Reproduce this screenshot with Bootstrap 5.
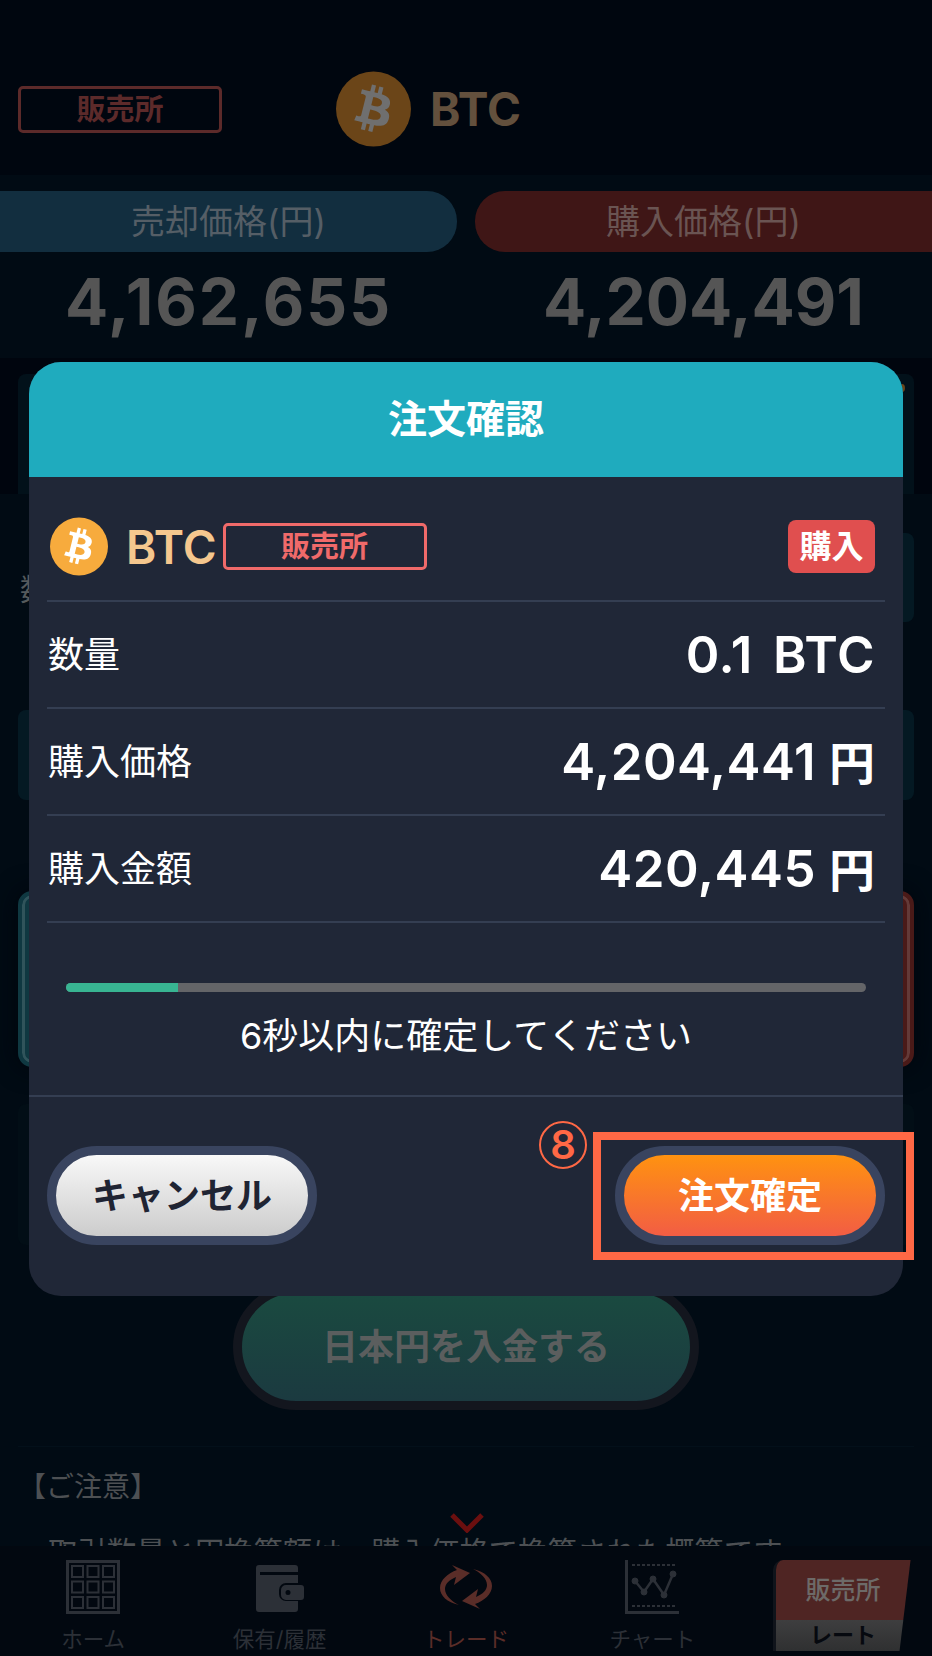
<!DOCTYPE html>
<html lang="ja">
<head>
  <meta charset="UTF-8" />
  <meta name="viewport" content="width=device-width, initial-scale=1.0"/>
  <title>注文確認</title>
  <link href="https://cdn.jsdelivr.net/npm/bootstrap@5.3.0/dist/css/bootstrap.min.css" rel="stylesheet"/>
  <style>
    body { background: #010b14; font-family: Inter, "Noto Sans CJK JP", sans-serif; width: 932px; height: 1656px; overflow: hidden; }
    .app-page { position: relative; height: 1656px; overflow: hidden; }
    .btc-disc { fill: var(--disc); }
    .btc-glyph { fill: var(--glyph); }

    /* dimmed page behind the dialog */
    .top-head { height: 175px; background: #00060f; padding: 71px 0 28px 18px; }
    .market-tag { border: 3px solid; border-radius: 5px; width: 204px; height: 47px; font-size: 29px; font-weight: 700; line-height: 1; }
    .top-head .market-tag { border-color: #5c2a2a; color: #5c2a2a; margin-right: 114px; }
    .top-coin { width: 75px; height: 76px; --disc: #6b4518; --glyph: #6f6f6f; }
    .top-sym { font-size: 46px; font-weight: 700; color: #63503d; margin-left: 19px; line-height: 1; }
    .price-wrap { height: 183px; padding-top: 16px; }
    .price-col { width: 457px; }
    .price-bar { height: 61px; font-size: 34px; line-height: 61px; text-align: center; }
    .price-bar.sell { background: #122e3f; color: #555e66; border-radius: 0 30px 30px 0; }
    .price-bar.buy { background: #3f1616; color: #6a5452; border-radius: 30px 0 0 30px; }
    .price-num { font-size: 64px; font-weight: 700; color: #555555; text-align: center; line-height: 1; margin-top: 18px; letter-spacing: 2px; }
    .price-num.tight { letter-spacing: 0; }
    .coin-band { height: 136px; background: #00050e; padding-top: 16px; }
    .ghost-panel { background: #02111a; border-radius: 8px; margin: 0 18px; }
    .coin-band .ghost-panel { height: 120px; border-radius: 8px 8px 0 0; position: relative; }
    .ghost-speck { position: absolute; right: 9px; top: 10px; width: 6px; height: 8px; background: #6b4518; border-radius: 50%; }
    .qty-line { height: 89px; margin: 39px 18px 0 20px; font-size: 30px; color: #555a5c; }
    .qty-box { flex: 1; height: 89px; background: #041923; border-radius: 8px; margin-left: 120px; }
    .rate-panel { height: 90px; background: #041923; margin-top: 88px; }
    .side-row { margin: 91px 18px 0; height: 176px; gap: 20px; }
    .side-btn { flex: 1; border-radius: 14px; border: 4px solid; box-shadow: inset 0 0 0 3px rgba(255,255,255,.14), 0 0 24px #00050c; }
    .side-btn.sell { background: #0f3841; border-color: #0f3841; }
    .side-btn.buy { background: #4a1a18; border-color: #4a1a18; }
    .info-panel { height: 141px; background: #020e16; margin-top: 37px; }
    .deposit-btn { width: 466px; height: 126px; margin: 39px auto 0; border-radius: 63px; border: 9px solid #13161e; background: linear-gradient(#1a4a40, #1b3a40); color: #5b5e5e; font-size: 36px; font-weight: 700; }
    .notes { flex: 1; min-height: 0; overflow: hidden; margin: 36px 18px 0; border-top: 1px solid #03101a; color: #4d5053; }
    .notes-head { font-size: 28px; line-height: 40px; margin-top: 20px; }
    .notes-line { font-size: 29.4px; line-height: 40px; margin: 26px 0 0 30px; white-space: nowrap; }
    .page-col { height: 1656px; }
    .down-mark { position: absolute; left: 450px; top: 1513px; }

    /* tab bar */
    .tab-row { height: 110px; background: #020810; }
    .tab-cell { width: 20%; padding-top: 14px; text-align: center; color: #2c3037; font-size: 21.5px; line-height: 1; }
    .tab-cell svg { display: block; margin: 0 auto 15px; height: 54px; }
    .tab-cell.now { color: #5a2d28; }
    .rate-tab { width: 138px; height: 91px; margin-left: 27px; border-left: 3px solid #10141b; clip-path: polygon(0 0, 100% 0, 92% 100%, 0 100%); border-radius: 10px 0 0 0; overflow: hidden; }
    .rate-top { height: 60px; background: #4f2523; color: #6d6a68; font-size: 25px; font-weight: 500; line-height: 60px; text-align: center; }
    .rate-low { height: 31px; background: linear-gradient(#3e3e3f, #2f3031); color: #06090f; font-size: 22px; font-weight: 700; line-height: 31px; text-align: center; }

    /* dialog */
    .confirm-box { position: absolute; left: 29px; top: 362px; width: 874px; height: 934px; background: #202737; border-radius: 32px; border: 0; color: #fff; overflow: hidden; }
    .confirm-head { height: 115px; background: #1fabbe; font-size: 39px; font-weight: 700; }
    .confirm-body { padding: 0 18px; }
    .sum-row { border-bottom: 2px solid #343e52; height: 107px; padding: 0 10px 0 1px; }
    .sum-row.first { height: 125px; padding: 16px 10px 0 3px; }
    .sum-coin { width: 58px; height: 59px; --disc: #f7ab3d; --glyph: #fff; }
    .sum-sym { font-size: 46px; font-weight: 600; color: #f5c78e; margin-left: 18px; line-height: 1; }
    .sum-row .market-tag { border-color: #f06a6a; color: #f06a6a; margin-left: 6px; }
    .side-flag { width: 87px; height: 53px; background: #e04f4f; border-radius: 8px; font-size: 32px; font-weight: 700; }
    .sum-label { font-size: 36px; }
    .sum-val { font-size: 51px; font-weight: 600; line-height: 1; letter-spacing: .5px; word-spacing: 7px; }
    .sum-val i { font-style: normal; font-size: 46px; margin-left: 13px; letter-spacing: 0; }
    .time-bar { height: 9px; background: #646568; border-radius: 5px; margin: 60px 19px 0; }
    .time-bar .progress-bar { background: #38b592; width: 14%; }
    .time-note { font-size: 36px; text-align: center; margin-top: 19px; line-height: 50px; }
    .confirm-foot { position: absolute; left: 0; right: 0; top: 733px; border-top: 2px solid #343e52; padding: 49px 18px 0; }
    .pill-btn { width: 270px; height: 99px; border-radius: 50px; border: 9px solid #39445f; font-size: 36px; font-weight: 700; padding: 0; }
    .pill-btn.off { background: linear-gradient(#f8f8f8, #cccccc); color: #1f2433; }
    .pill-btn.go { background: linear-gradient(#ff9210, #f25d44); color: #fff; }

    /* guide marks on the picture */
    .guide-box { position: absolute; left: 593px; top: 1132px; width: 321px; height: 128px; border: 8px solid #ff6845; }
    .guide-num { position: absolute; left: 539px; top: 1121px; width: 48px; height: 48px; border: 2px solid #ff6845; border-radius: 50%; color: #ff6845; font-size: 40px; font-weight: 600; line-height: 1; }
  </style>
</head>
<body>
  <svg width="0" height="0" class="position-absolute">
    <symbol id="btc-mark" viewBox="0 0 64 64">
      <circle cx="32" cy="32" r="32" class="btc-disc"/>
      <path class="btc-glyph" d="M46.103 27.444c.637-4.258-2.605-6.547-7.038-8.074l1.438-5.768-3.511-.875-1.4 5.616c-.923-.23-1.871-.447-2.813-.662l1.41-5.653-3.509-.875-1.439 5.766c-.764-.174-1.514-.346-2.242-.527l.004-.018-4.842-1.209-.934 3.75s2.605.597 2.55.634c1.422.355 1.679 1.296 1.636 2.042l-1.638 6.571c.098.025.225.061.365.117l-.371-.092-2.296 9.205c-.174.432-.615 1.08-1.609.834.035.051-2.552-.637-2.552-.637l-1.743 4.019 4.569 1.139c.85.213 1.683.436 2.503.646l-1.453 5.834 3.507.875 1.439-5.772c.958.26 1.888.5 2.798.726l-1.434 5.745 3.511.875 1.453-5.823c5.987 1.133 10.489.676 12.384-4.739 1.527-4.36-.076-6.875-3.226-8.515 2.294-.529 4.022-2.038 4.483-5.155zM38.08 38.696c-1.085 4.36-8.426 2.003-10.806 1.412l1.928-7.729c2.38.594 10.012 1.77 8.878 6.317zm1.086-11.315c-.99 3.966-7.1 1.951-9.082 1.457l1.748-7.01c1.982.494 8.365 1.416 7.334 5.553z"/>
    </symbol>
  </svg>

  <div class="app-page">
    <div class="page-col d-flex flex-column">
      <div class="top-head d-flex align-items-center">
        <div class="market-tag d-flex align-items-center justify-content-center">販売所</div>
        <svg class="top-coin"><use href="#btc-mark"/></svg>
        <div class="top-sym">BTC</div>
      </div>

      <div class="price-wrap d-flex justify-content-between">
        <div class="price-col">
          <div class="price-bar sell">売却価格(円)</div>
          <div class="price-num">4,162,655</div>
        </div>
        <div class="price-col">
          <div class="price-bar buy">購入価格(円)</div>
          <div class="price-num tight">4,204,491</div>
        </div>
      </div>

      <div class="coin-band"><div class="ghost-panel"><span class="ghost-speck"></span></div></div>

      <div class="qty-line d-flex align-items-center"><span class="pt-4">数量</span><div class="qty-box"></div></div>
      <div class="ghost-panel rate-panel"></div>
      <div class="side-row d-flex">
        <div class="side-btn sell"></div>
        <div class="side-btn buy"></div>
      </div>
      <div class="ghost-panel info-panel"></div>
      <div class="deposit-btn d-flex align-items-center justify-content-center">日本円を入金する</div>
      <div class="notes">
        <div class="notes-head">【ご注意】</div>
        <div class="notes-line">取引数量と円換算額は、購入価格で換算された概算です</div>
      </div>

      <div class="tab-row d-flex">
        <div class="tab-cell">
          <svg width="54" height="54" viewBox="0 0 54 54" fill="none" stroke="currentColor" stroke-width="2">
            <rect x="1.5" y="1.5" width="51" height="51" stroke-width="3"/>
            <rect x="6" y="6" width="11" height="11"/><rect x="21.5" y="6" width="11" height="11"/><rect x="37" y="6" width="11" height="11"/>
            <rect x="6" y="21.5" width="11" height="11"/><rect x="21.5" y="21.5" width="11" height="11"/><rect x="37" y="21.5" width="11" height="11"/>
            <rect x="6" y="37" width="11" height="11"/><rect x="21.5" y="37" width="11" height="11"/><rect x="37" y="37" width="11" height="11"/>
          </svg>
          ホーム
        </div>
        <div class="tab-cell">
          <svg width="48" height="54" viewBox="0 0 48 54" fill="currentColor">
            <path d="M3 5h36a3 3 0 0 1 3 3v4H4v3h38v8H30a7 7 0 0 0-7 7v4a7 7 0 0 0 7 7h12v8a3 3 0 0 1-3 3H3a3 3 0 0 1-3-3V8a3 3 0 0 1 3-3z"/>
            <path fill-rule="evenodd" d="M30 25h15a3 3 0 0 1 3 3v9a3 3 0 0 1-3 3H30a5 5 0 0 1-5-5v-5a5 5 0 0 1 5-5zm2 5a2.500 2.500 0 1 0 0 5 2.500 2.500 0 0 0 0-5z"/>
          </svg>
          保有/履歴
        </div>
        <div class="tab-cell now">
          <svg width="54" height="54" viewBox="0 -5 54 54" fill="currentColor">
            <path d="M20 40C8 37 1 31 1 23C1 15 9 8 18 5L13 0L31 8L15 20L17 12C10 15 6 19 6 24C6 30 12 36 20 40Z"/>
            <path d="M20 40C8 37 1 31 1 23C1 15 9 8 18 5L13 0L31 8L15 20L17 12C10 15 6 19 6 24C6 30 12 36 20 40Z" transform="rotate(180 27 22)"/>
          </svg>
          トレード
        </div>
        <div class="tab-cell">
          <svg width="54" height="54" viewBox="0 0 54 54" fill="currentColor" stroke="currentColor">
            <path d="M1.500 0V52.500H54" fill="none" stroke-width="3"/>
            <path d="M7 5H52M7 46H52" fill="none" stroke-width="2" stroke-dasharray="3 2"/>
            <path d="M10 21L19 32L28 19L39 35L48 14" fill="none" stroke-width="2.500"/>
            <circle cx="10" cy="21" r="3"/><circle cx="19" cy="32" r="3"/><circle cx="28" cy="19" r="3"/><circle cx="39" cy="35" r="3"/><circle cx="48" cy="14" r="3"/>
          </svg>
          チャート
        </div>
        <div class="tab-cell">
          <div class="rate-tab">
            <div class="rate-top">販売所</div>
            <div class="rate-low">レート</div>
          </div>
        </div>
      </div>
    </div>

    <svg class="down-mark" width="34" height="20" viewBox="0 0 34 20" fill="none" stroke="#6b0f0f" stroke-width="5"><path d="M2 2L17 17L32 2"/></svg>

    <div class="modal-content confirm-box">
      <div class="confirm-head d-flex align-items-center justify-content-center">注文確認</div>
      <div class="confirm-body">
        <div class="sum-row first d-flex align-items-center">
          <svg class="sum-coin"><use href="#btc-mark"/></svg>
          <span class="sum-sym">BTC</span>
          <div class="market-tag d-flex align-items-center justify-content-center">販売所</div>
          <div class="side-flag ms-auto d-flex align-items-center justify-content-center">購入</div>
        </div>
        <div class="sum-row d-flex align-items-center justify-content-between">
          <span class="sum-label">数量</span><span class="sum-val">0.1 BTC</span>
        </div>
        <div class="sum-row d-flex align-items-center justify-content-between">
          <span class="sum-label">購入価格</span><span class="sum-val">4,204,441<i>円</i></span>
        </div>
        <div class="sum-row d-flex align-items-center justify-content-between">
          <span class="sum-label">購入金額</span><span class="sum-val">420,445<i>円</i></span>
        </div>
        <div class="progress time-bar"><div class="progress-bar"></div></div>
        <div class="time-note">6秒以内に確定してください</div>
      </div>
      <div class="confirm-foot d-flex justify-content-between">
        <button type="button" class="btn pill-btn off">キャンセル</button>
        <button type="button" class="btn pill-btn go">注文確定</button>
      </div>
    </div>

    <div class="guide-box"></div>
    <div class="guide-num d-flex align-items-center justify-content-center">8</div>
  </div>
</body>
</html>
